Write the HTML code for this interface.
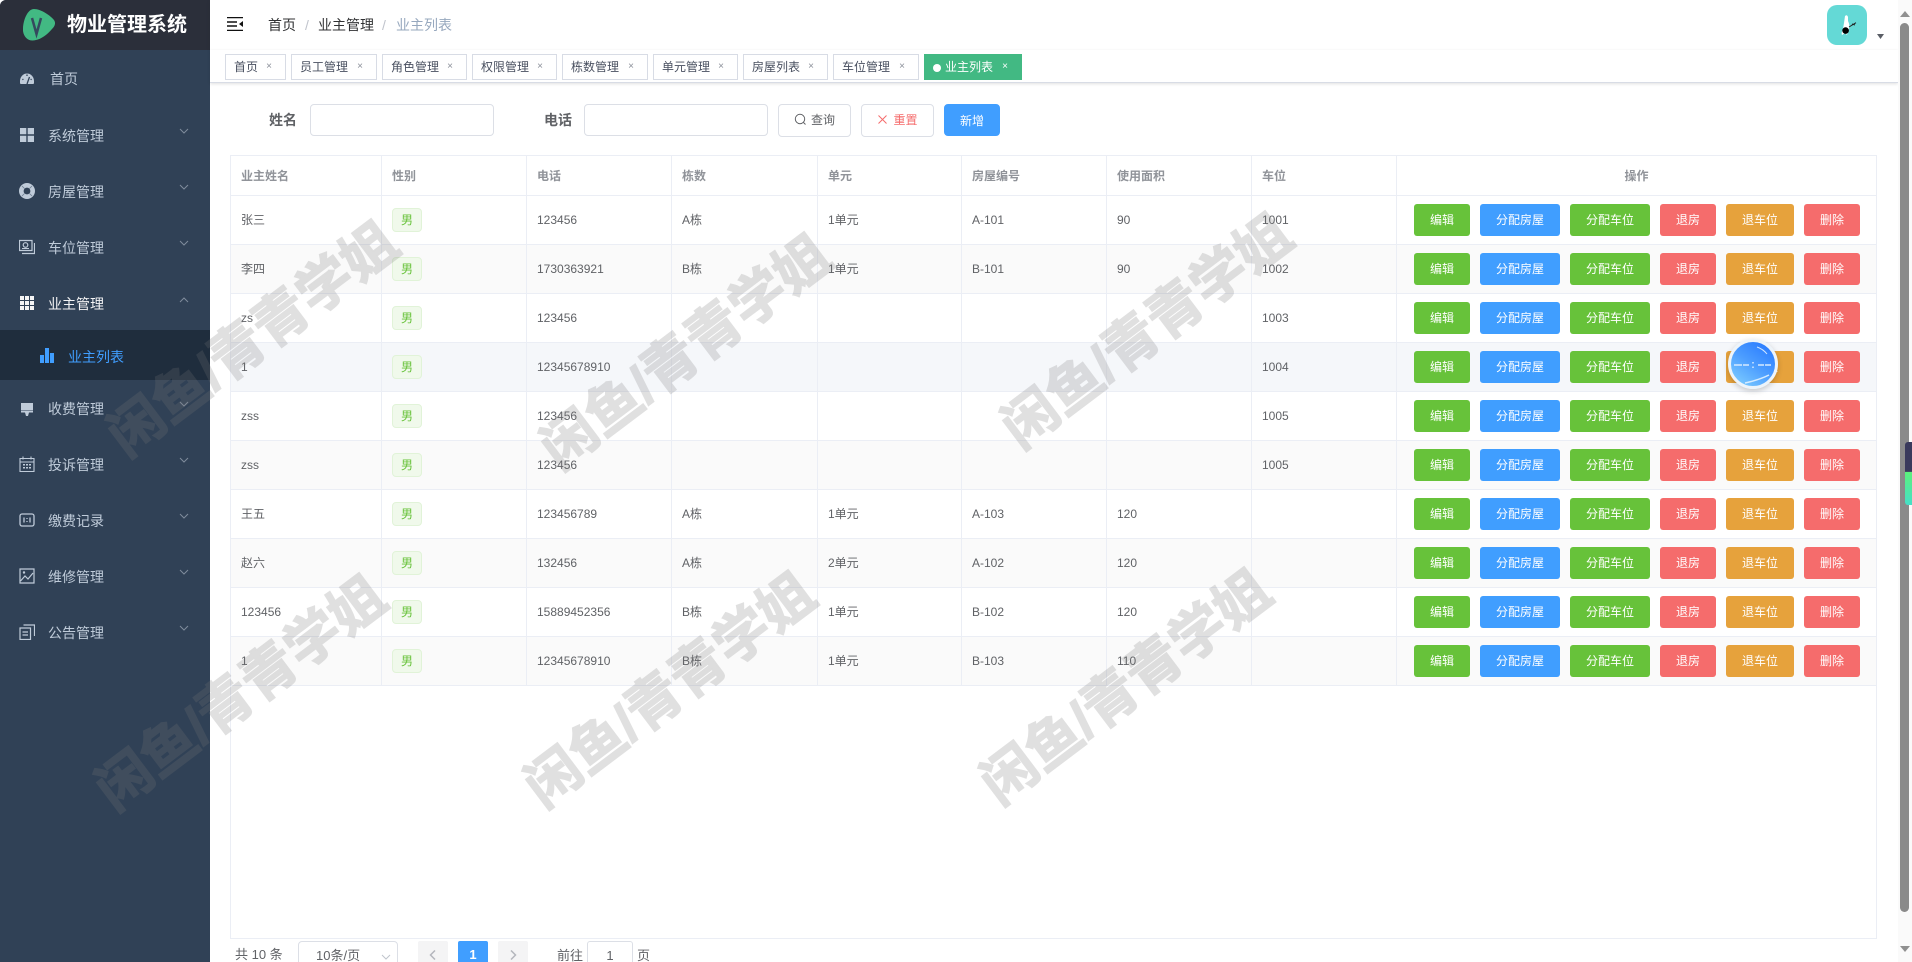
<!DOCTYPE html>
<html lang="zh">
<head>
<meta charset="utf-8">
<title>物业管理系统</title>
<style>
*{box-sizing:border-box}
html,body{margin:0;padding:0;width:1912px;height:962px;overflow:hidden;background:#fff}
body{font-family:"Liberation Sans","Noto Sans CJK SC",sans-serif;color:#606266;position:relative}
.abs{position:absolute;white-space:nowrap}
#side{position:absolute;left:0;top:0;width:210px;height:962px;background:#304156;border-top-left-radius:6px}
#logo{position:absolute;left:0;top:0;width:210px;height:50px;background:#2b2f3a;border-top-left-radius:6px}
#logo .t{position:absolute;left:67px;top:11px;font-size:20px;font-weight:700;color:#fff;line-height:28px;white-space:nowrap}
.mi{position:absolute;left:0;width:210px;height:56px;color:#bfcbd9;font-size:14px}
.mi span{position:absolute;left:48px;top:19px;line-height:20px}
.mi svg.i{position:absolute;left:19px;top:20px;width:16px;height:16px}
.mi svg.a{position:absolute;left:179px;top:21px;width:10px;height:7px}
#sub{position:absolute;left:0;top:330px;width:210px;height:50px;background:#1f2d3d;color:#409eff;font-size:14px}
#sub span{position:absolute;left:68px;top:17px;line-height:20px}
#sub svg{position:absolute;left:40px;top:18px}
#nav{position:absolute;left:210px;top:0;width:1688px;height:50px;background:#fff;box-shadow:0 1px 4px rgba(0,21,41,.08)}
.bc{position:absolute;top:15px;font-size:14px;line-height:20px;color:#303133;white-space:nowrap}
#tags{position:absolute;left:210px;top:50px;width:1688px;height:33px;background:#fff;border-bottom:1px solid #d8dce5;box-shadow:0 1px 3px rgba(0,0,0,.12)}
.tg{position:absolute;top:4px;height:26px;border:1px solid #d8dce5;background:#fff;color:#495060;font-size:12px;line-height:24px;padding-left:8px;white-space:nowrap}
.tg i{position:absolute;right:13px;top:0;font-style:normal;font-size:10px;color:#8a8f99}
.tg.on{background:#42b983;border-color:#42b983;color:#fff;padding-left:20px}
.tg.on i{color:#fff}
.tg.on b{position:absolute;left:8px;top:9px;width:8px;height:8px;border-radius:50%;background:#fff}
.inp{position:absolute;top:104px;height:32px;border:1px solid #dcdfe6;border-radius:4px;background:#fff}
.lab{position:absolute;top:110px;font-size:14px;line-height:20px;font-weight:700;color:#606266}
.fb{position:absolute;top:104px;height:33px;border:1px solid #dcdfe6;border-radius:4px;background:#fff;font-size:12px;line-height:31px;text-align:center;white-space:nowrap}
#tb{position:absolute;left:230px;top:155px;width:1647px;height:784px;border:1px solid #ebeef5;border-bottom-color:#ebeef5}
table{border-collapse:separate;border-spacing:0;table-layout:fixed;width:1645px;font-size:12px;line-height:16px;color:#606266}
th,td{padding:0 0 0 10px;border-right:1px solid #ebeef5;border-bottom:1px solid #ebeef5;text-align:left;font-weight:400;white-space:nowrap;overflow:hidden}
th{height:40px;color:#909399;font-weight:700}
td{height:49px}
th:last-child,td:last-child{border-right:0}
tr.s td{background:#fafafa}
tr.h td{background:#f5f7fa}
.g{display:inline-block;width:30px;height:24px;line-height:22px;border:1px solid #e1f3d8;background:#f0f9eb;color:#67c23a;border-radius:4px;text-align:center;font-size:12px;vertical-align:middle}
td.ops{padding:0 0 0 17px}
.b{display:inline-block;height:32px;line-height:33px;border-radius:3px;color:#fff;font-size:12px;text-align:center;margin-right:10px;vertical-align:middle}
.w56{width:56px}.w80{width:80px}.w68{width:68px}
.gr{background:#67c23a}.bl{background:#409eff}.rd{background:#f56c6c}.or{background:#e6a23c}
.wm{position:absolute;width:480px;height:70px;margin:-35px 0 0 -240px;line-height:70px;text-align:center;font-size:55px;font-weight:700;color:#787878;-webkit-text-stroke:1.5px #787878;opacity:.22;transform:rotate(-37deg);white-space:nowrap;pointer-events:none;z-index:50}
#sb{position:absolute;left:1898px;top:0;width:14px;height:962px;background:#fafafa}
#ball{position:absolute;left:1728px;top:339px;width:50px;height:50px;border-radius:50%;border:3px solid #edf4fa;background:linear-gradient(215deg,#2a7cff 10%,#4c9dff 50%,#7ccbff 92%);box-shadow:0 2px 6px rgba(0,0,0,.2);z-index:40}
</style>
</head>
<body>

<div id="side">
  <div id="logo">
    <svg class="abs" style="left:23px;top:9px" width="32" height="32" viewBox="0 0 32 32"><path d="M11 0C18 0 28 7 31 11C33 14 32 17 29 20C24 26 18 30 13 31C6 33 1 29 0 22C-.5 13 4 0 11 0Z" fill="#42b983"/><path d="M9 9L13.500 25L18 9" fill="none" stroke="#35495e" stroke-width="2.500"/></svg>
    <div class="t">物业管理系统</div>
  </div>

  <div class="mi" style="top:51px"><svg class="i" viewBox="0 0 16 16"><path d="M1 10A7 7.500 0 0 1 15 10L15 12Q15 13 14 13H2Q1 13 1 12Z" fill="#bfcbd9"/><path d="M8 13L10.500 6M3.500 8l.8.8M8 3.500v1.500M12.500 8l-.8.8" stroke="#304156" stroke-width="1.300" fill="none"/></svg><span style="left:50px;top:18px">首页</span></div>

  <div class="mi" style="top:107px"><svg class="i" viewBox="0 0 16 16"><path d="M1 1h6.300v6.300H1zM8.700 1H15v6.300H8.700zM1 8.700h6.300V15H1zM8.700 8.700H15V15H8.700z" fill="#bfcbd9"/></svg><span>系统管理</span><svg class="a" viewBox="0 0 10 7"><path d="M1 1l4 4 4-4" fill="none" stroke="#7f8c9c"/></svg></div>

  <div class="mi" style="top:163px"><svg class="i" viewBox="0 0 16 16"><circle cx="8" cy="8" r="5.700" fill="none" stroke="#bfcbd9" stroke-width="4.600"/><path d="M3 3l2.500 2.500M13 3l-2.500 2.500M3 13l2.500-2.500M13 13l-2.500-2.500" stroke="#6d7d90" stroke-width=".8"/></svg><span>房屋管理</span><svg class="a" viewBox="0 0 10 7"><path d="M1 1l4 4 4-4" fill="none" stroke="#7f8c9c"/></svg></div>

  <div class="mi" style="top:219px"><svg class="i" viewBox="0 0 16 16"><path d="M.5 1.500h12.500v10H.5zM3 14.500h12.500V4" fill="none" stroke="#bfcbd9" stroke-width="1.200"/><circle cx="6.500" cy="6" r="2.300" fill="none" stroke="#bfcbd9" stroke-width="1.200"/><path d="M3 9.500h7" stroke="#bfcbd9"/></svg><span>车位管理</span><svg class="a" viewBox="0 0 10 7"><path d="M1 1l4 4 4-4" fill="none" stroke="#7f8c9c"/></svg></div>

  <div class="mi" style="top:275px;color:#f4f4f5"><svg class="i" viewBox="0 0 16 16"><path d="M1 1h4v4H1zM6 1h4v4H6zM11 1h4v4h-4zM1 6h4v4H1zM6 6h4v4H6zM11 6h4v4h-4zM1 11h4v4H1zM6 11h4v4H6zM11 11h4v4h-4z" fill="#f4f4f5"/></svg><span>业主管理</span><svg class="a" viewBox="0 0 10 7"><path d="M1 6l4-4 4 4" fill="none" stroke="#7f8c9c"/></svg></div>

  <div id="sub"><svg width="14" height="15" viewBox="0 0 14 15"><path d="M0 7h4v8H0zM5 0h4v15H5zM10 5h4v10h-4z" fill="#409eff"/></svg><span>业主列表</span></div>

  <div class="mi" style="top:380px"><svg class="i" viewBox="0 0 16 16"><path d="M2 3h12v7H2zM2 10.500h12v2H2zM6 12.500h4l-1 3.500H7z" fill="#bfcbd9"/></svg><span>收费管理</span><svg class="a" viewBox="0 0 10 7"><path d="M1 1l4 4 4-4" fill="none" stroke="#7f8c9c"/></svg></div>

  <div class="mi" style="top:436px"><svg class="i" viewBox="0 0 16 16"><path d="M1 2.500h14v13H1zM1 6h14" fill="none" stroke="#bfcbd9" stroke-width="1.100"/><path d="M4 0.500v3M12 0.500v3" stroke="#bfcbd9" stroke-width="1.100"/><path d="M4 8h2v1.500H4zM7 8h2v1.500H7zM10 8h2v1.500h-2zM4 11h2v1.500H4zM7 11h2v1.500H7zM10 11h2v1.500h-2z" fill="#bfcbd9"/></svg><span>投诉管理</span><svg class="a" viewBox="0 0 10 7"><path d="M1 1l4 4 4-4" fill="none" stroke="#7f8c9c"/></svg></div>

  <div class="mi" style="top:492px"><svg class="i" viewBox="0 0 16 16"><rect x="1" y="2" width="14" height="12" rx="2" fill="none" stroke="#bfcbd9" stroke-width="1.300"/><path d="M5 5.500v5M8 6v1M8 9v1M11 5.500v5" stroke="#bfcbd9" stroke-width="1.300"/></svg><span>缴费记录</span><svg class="a" viewBox="0 0 10 7"><path d="M1 1l4 4 4-4" fill="none" stroke="#7f8c9c"/></svg></div>

  <div class="mi" style="top:548px"><svg class="i" viewBox="0 0 16 16"><path d="M1 1h14v14H1z" fill="none" stroke="#bfcbd9" stroke-width="1.200"/><path d="M1.500 13L6 8l3 3 5-6" fill="none" stroke="#bfcbd9" stroke-width="1.200"/><circle cx="5" cy="4.500" r="1.200" fill="#bfcbd9"/></svg><span>维修管理</span><svg class="a" viewBox="0 0 10 7"><path d="M1 1l4 4 4-4" fill="none" stroke="#7f8c9c"/></svg></div>

  <div class="mi" style="top:604px"><svg class="i" viewBox="0 0 16 16"><path d="M1 4h10.500v11.500H1z" fill="none" stroke="#bfcbd9" stroke-width="1.200"/><path d="M4.500 1h11v11" fill="none" stroke="#bfcbd9" stroke-width="1.200"/><path d="M3.500 8h5.500M3.500 11h5.500" stroke="#bfcbd9" stroke-width="1.200"/></svg><span>公告管理</span><svg class="a" viewBox="0 0 10 7"><path d="M1 1l4 4 4-4" fill="none" stroke="#7f8c9c"/></svg></div>
</div>

<div id="nav">
  <svg class="abs" style="left:17px;top:17px" width="16" height="14" viewBox="0 0 16 14"><path d="M0 .5h16M0 13.500h16M0 5h10M0 9h10" stroke="#111" stroke-width="1.500" fill="none"/><path d="M16 4v6l-4-3z" fill="#111"/></svg>
  <div class="bc" style="left:58px">首页</div>
  <div class="bc" style="left:95px;color:#c0c4cc">/</div>
  <div class="bc" style="left:108px">业主管理</div>
  <div class="bc" style="left:172px;color:#c0c4cc">/</div>
  <div class="bc" style="left:186px;color:#97a8be">业主列表</div>
  <div class="abs" style="left:1617px;top:5px;width:40px;height:40px;border-radius:10px;background:#64d9d6"></div>
  <svg class="abs" style="left:1627px;top:13px" width="22" height="26" viewBox="0 0 22 26"><path d="M8 3Q10 1 11 4L11 8Q13 12 12 16L10 22 8 20 5 22Q4 20 6 16L7 10Z" fill="#fff"/><circle cx="8.600" cy="17.600" r="3.300" fill="#000"/><path d="M12 14L19 9.700M15 11l3 1" stroke="#222" stroke-width="1" fill="none"/></svg>
  <svg class="abs" style="left:1667px;top:34px" width="7" height="5" viewBox="0 0 7 5"><path d="M0 0h7L3.500 5z" fill="#5a5e66"/></svg>
</div>

<div id="tags">
  <div class="tg" style="left:15px;width:61px">首页<i>×</i></div>
  <div class="tg" style="left:81px;width:86px">员工管理<i>×</i></div>
  <div class="tg" style="left:172px;width:85px">角色管理<i>×</i></div>
  <div class="tg" style="left:262px;width:85px">权限管理<i>×</i></div>
  <div class="tg" style="left:352px;width:86px">栋数管理<i>×</i></div>
  <div class="tg" style="left:443px;width:85px">单元管理<i>×</i></div>
  <div class="tg" style="left:533px;width:85px">房屋列表<i>×</i></div>
  <div class="tg" style="left:623px;width:86px">车位管理<i>×</i></div>
  <div class="tg on" style="left:714px;width:98px"><b></b>业主列表<i>×</i></div>
</div>

<div class="lab" style="left:269px">姓名</div>
<div class="inp" style="left:310px;width:184px"></div>
<div class="lab" style="left:544px">电话</div>
<div class="inp" style="left:584px;width:184px"></div>
<div class="fb" style="left:778px;width:73px;color:#606266"><svg width="13" height="13" viewBox="0 0 13 13" style="vertical-align:-2px;margin-right:4px"><circle cx="6" cy="6" r="4.700" fill="none" stroke="#606266"/><path d="M9.500 9.500l2 2" stroke="#606266"/></svg>查询</div>
<div class="fb" style="left:861px;width:73px;color:#f56c6c"><svg width="11" height="11" viewBox="0 0 11 11" style="vertical-align:-1px;margin-right:5px"><path d="M1.500 1.500l8 8M9.500 1.500l-8 8" stroke="#f56c6c"/></svg>重置</div>
<div class="fb" style="left:944px;width:56px;height:32px;line-height:32px;background:#409eff;border-color:#409eff;color:#fff">新增</div>

<div id="tb">
<table>
<colgroup><col style="width:151px"><col style="width:145px"><col style="width:145px"><col style="width:146px"><col style="width:144px"><col style="width:145px"><col style="width:145px"><col style="width:145px"><col style="width:479px"></colgroup>
<tr><th>业主姓名</th><th>性别</th><th>电话</th><th>栋数</th><th>单元</th><th>房屋编号</th><th>使用面积</th><th>车位</th><th style="text-align:center;padding:0">操作</th></tr>
<tr><td>张三</td><td><span class="g">男</span></td><td>123456</td><td>A栋</td><td>1单元</td><td>A-101</td><td>90</td><td>1001</td><td class="ops"><span class="b w56 gr">编辑</span><span class="b w80 bl">分配房屋</span><span class="b w80 gr">分配车位</span><span class="b w56 rd">退房</span><span class="b w68 or">退车位</span><span class="b w56 rd">删除</span></td></tr>
<tr class="s"><td>李四</td><td><span class="g">男</span></td><td>1730363921</td><td>B栋</td><td>1单元</td><td>B-101</td><td>90</td><td>1002</td><td class="ops"><span class="b w56 gr">编辑</span><span class="b w80 bl">分配房屋</span><span class="b w80 gr">分配车位</span><span class="b w56 rd">退房</span><span class="b w68 or">退车位</span><span class="b w56 rd">删除</span></td></tr>
<tr><td>zs</td><td><span class="g">男</span></td><td>123456</td><td></td><td></td><td></td><td></td><td>1003</td><td class="ops"><span class="b w56 gr">编辑</span><span class="b w80 bl">分配房屋</span><span class="b w80 gr">分配车位</span><span class="b w56 rd">退房</span><span class="b w68 or">退车位</span><span class="b w56 rd">删除</span></td></tr>
<tr class="h"><td>1</td><td><span class="g">男</span></td><td>12345678910</td><td></td><td></td><td></td><td></td><td>1004</td><td class="ops"><span class="b w56 gr">编辑</span><span class="b w80 bl">分配房屋</span><span class="b w80 gr">分配车位</span><span class="b w56 rd">退房</span><span class="b w68 or">退车位</span><span class="b w56 rd">删除</span></td></tr>
<tr><td>zss</td><td><span class="g">男</span></td><td>123456</td><td></td><td></td><td></td><td></td><td>1005</td><td class="ops"><span class="b w56 gr">编辑</span><span class="b w80 bl">分配房屋</span><span class="b w80 gr">分配车位</span><span class="b w56 rd">退房</span><span class="b w68 or">退车位</span><span class="b w56 rd">删除</span></td></tr>
<tr class="s"><td>zss</td><td><span class="g">男</span></td><td>123456</td><td></td><td></td><td></td><td></td><td>1005</td><td class="ops"><span class="b w56 gr">编辑</span><span class="b w80 bl">分配房屋</span><span class="b w80 gr">分配车位</span><span class="b w56 rd">退房</span><span class="b w68 or">退车位</span><span class="b w56 rd">删除</span></td></tr>
<tr><td>王五</td><td><span class="g">男</span></td><td>123456789</td><td>A栋</td><td>1单元</td><td>A-103</td><td>120</td><td></td><td class="ops"><span class="b w56 gr">编辑</span><span class="b w80 bl">分配房屋</span><span class="b w80 gr">分配车位</span><span class="b w56 rd">退房</span><span class="b w68 or">退车位</span><span class="b w56 rd">删除</span></td></tr>
<tr class="s"><td>赵六</td><td><span class="g">男</span></td><td>132456</td><td>A栋</td><td>2单元</td><td>A-102</td><td>120</td><td></td><td class="ops"><span class="b w56 gr">编辑</span><span class="b w80 bl">分配房屋</span><span class="b w80 gr">分配车位</span><span class="b w56 rd">退房</span><span class="b w68 or">退车位</span><span class="b w56 rd">删除</span></td></tr>
<tr><td>123456</td><td><span class="g">男</span></td><td>15889452356</td><td>B栋</td><td>1单元</td><td>B-102</td><td>120</td><td></td><td class="ops"><span class="b w56 gr">编辑</span><span class="b w80 bl">分配房屋</span><span class="b w80 gr">分配车位</span><span class="b w56 rd">退房</span><span class="b w68 or">退车位</span><span class="b w56 rd">删除</span></td></tr>
<tr class="s"><td>1</td><td><span class="g">男</span></td><td>12345678910</td><td>B栋</td><td>1单元</td><td>B-103</td><td>110</td><td></td><td class="ops"><span class="b w56 gr">编辑</span><span class="b w80 bl">分配房屋</span><span class="b w80 gr">分配车位</span><span class="b w56 rd">退房</span><span class="b w68 or">退车位</span><span class="b w56 rd">删除</span></td></tr>
</table>
</div>

<div class="abs" style="left:235px;top:946px;font-size:13px;line-height:17px;color:#606266">共 10 条</div>
<div class="abs" style="left:298px;top:941px;width:100px;height:32px;border:1px solid #dcdfe6;border-radius:4px;font-size:13px;line-height:28px;padding-left:17px;color:#606266">10条/页<svg class="abs" style="left:82px;top:12px" width="10" height="7" viewBox="0 0 10 7"><path d="M1 1l4 4 4-4" fill="none" stroke="#c0c4cc"/></svg></div>
<div class="abs" style="left:418px;top:941px;width:30px;height:28px;background:#f4f4f5;border-radius:2px"><svg class="abs" style="left:11px;top:9px" width="7" height="10" viewBox="0 0 7 10"><path d="M6 .5L1.500 5 6 9.500" fill="none" stroke="#b4b7bd" stroke-width="1.500"/></svg></div>
<div class="abs" style="left:458px;top:941px;width:30px;height:28px;background:#409eff;border-radius:2px;color:#fff;font-size:13px;font-weight:700;text-align:center;line-height:27px">1</div>
<div class="abs" style="left:498px;top:941px;width:30px;height:28px;background:#f4f4f5;border-radius:2px"><svg class="abs" style="left:12px;top:9px" width="7" height="10" viewBox="0 0 7 10"><path d="M1 .5L5.500 5 1 9.500" fill="none" stroke="#b4b7bd" stroke-width="1.500"/></svg></div>
<div class="abs" style="left:557px;top:947px;font-size:13px;line-height:17px;color:#606266">前往</div>
<div class="abs" style="left:587px;top:941px;width:46px;height:28px;border:1px solid #dcdfe6;border-radius:3px;font-size:13px;text-align:center;line-height:28px;color:#606266">1</div>
<div class="abs" style="left:637px;top:947px;font-size:13px;line-height:17px;color:#606266">页</div>

<div id="ball">
<svg class="abs" style="left:0;top:0" width="44" height="44" viewBox="0 0 44 44"><path d="M3 23h8M12 23h6M27 23h6M34 23h6M22 20v1.500M22 24.500v1.500" stroke="#d6e9ff" stroke-width="1.500" fill="none"/><path d="M26 5Q32 7 36 12" stroke="#cfe6ff" stroke-width="1" fill="none"/><path d="M14 41Q28 38 38 33" stroke="#d6ecff" stroke-width="1.500" fill="none"/></svg>
</div>

<div id="sb">
  <svg class="abs" style="left:2px;top:11px" width="10" height="6" viewBox="0 0 10 6"><path d="M5 0l5 6H0z" fill="#909090"/></svg>
  <div class="abs" style="left:2px;top:23px;width:9px;height:889px;background:#8a8a8a;border-radius:5px"></div>
  <svg class="abs" style="left:2px;top:946px" width="10" height="6" viewBox="0 0 10 6"><path d="M0 0h10L5 6z" fill="#909090"/></svg>
</div>
<div class="abs" style="left:1905px;top:442px;width:7px;height:63px;border-radius:3px 0 0 3px;background:linear-gradient(#3a3a5c 0,#3a3a5c 47%,#5cf07c 48%,#45e0c8 100%);z-index:45"></div>

<div class="wm" style="left:253px;top:339px">闲鱼/青青学姐</div>
<div class="wm" style="left:686px;top:352px">闲鱼/青青学姐</div>
<div class="wm" style="left:1147px;top:331px">闲鱼/青青学姐</div>
<div class="wm" style="left:241px;top:693px">闲鱼/青青学姐</div>
<div class="wm" style="left:670px;top:690px">闲鱼/青青学姐</div>
<div class="wm" style="left:1126px;top:687px">闲鱼/青青学姐</div>

</body>
</html>
